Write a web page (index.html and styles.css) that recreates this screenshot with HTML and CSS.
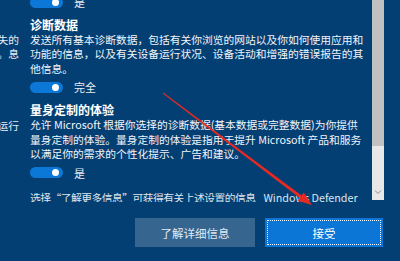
FILE: index.html
```html
<!DOCTYPE html>
<html lang="zh-CN">
<head>
    <meta charset="UTF-8">
    <meta name="viewport" content="width=device-width, initial-scale=1.0">
    <title>隐私设置</title>
    <link rel="stylesheet" href="styles.css">
</head>
<body>
    <div class="page">
        <div class="scroll-area">
            <div class="side">
                <div class="side-line side-first">失的</div>
                <div class="side-line">息。</div>
                <div class="side-line side-third">运行</div>
            </div>

            <div class="content">
                <div class="toggle-row first-row">
                    <span class="toggle"><span class="knob"></span></span>
                    <span class="toggle-label">是</span>
                </div>

                <h2>诊断数据</h2>
                <p>发送所有基本诊断数据，包括有关你浏览的网站以及你如何使用应用和<br>功能的信息，以及有关设备运行状况、设备活动和增强的错误报告的其<br>他信息。</p>

                <div class="toggle-row">
                    <span class="toggle"><span class="knob"></span></span>
                    <span class="toggle-label">完全</span>
                </div>

                <h2>量身定制的体验</h2>
                <p>允许 Microsoft 根据你选择的诊断数据(基本数据或完整数据)为你提供<br>量身定制的体验。量身定制的体验是指用于提升 Microsoft 产品和服务<br>以满足你的需求的个性化提示、广告和建议。</p>

                <div class="toggle-row">
                    <span class="toggle"><span class="knob"></span></span>
                    <span class="toggle-label">是</span>
                </div>

                <p class="more">选择“了解更多信息”可获得有关上述设置的信息 <span class="defender">Windows Defender</span></p>
            </div>

            <div class="scrollbar">
                <div class="thumb"></div>
                <div class="track">
                    <svg class="chevron" width="8" height="6" viewBox="0 0 8 6">
                        <path d="M1 1.5 L4 4.5 L7 1.5" fill="none" stroke="#8a8a8a" stroke-width="1"/>
                    </svg>
                </div>
            </div>
        </div>

        <div class="footer">
            <button class="btn btn-secondary">了解详细信息</button>
            <button class="btn btn-primary">接受</button>
        </div>
    </div>

    <!-- red annotation arrow drawn over the screenshot -->
    <svg class="annotation" width="400" height="261" viewBox="0 0 400 261">
        <polygon points="162.7,93.4 163.3,92.6 301.9,195.8 300.1,198.2" fill="#e42a22"/>
        <polygon points="312,205 303.8,192.4 297.6,200.8" fill="#e42a22"/>
    </svg>
</body>
</html>
```

FILE: styles.css
```css
body {
    margin: 0;
    width: 400px;
    height: 261px;
    overflow: hidden;
    background-color: #043f74;
    color: #ffffff;
    font-family: "Noto Sans CJK SC", "Noto Sans", sans-serif;
    position: relative;
}

.page {
    display: flex;
    flex-direction: column;
    height: 261px;
}

.scroll-area {
    display: flex;
    height: 202px;
    overflow: hidden;
}

.side {
    width: 30px;
    flex-shrink: 0;
    font-size: 10.75px;
    line-height: 14.5px;
    color: #e8eef5;
    overflow: hidden;
}

.side-line {
    width: 19px;
    white-space: nowrap;
    direction: rtl;
    overflow: hidden;
}

.side-first {
    margin-top: 32.75px;
}

.side-third {
    margin-top: 57px;
}

.content {
    width: 342px;
    flex-shrink: 0;
}

.toggle-row {
    display: flex;
    align-items: center;
    height: 11px;
    margin-top: 5.5px;
}

.first-row {
    margin-top: -3.5px;
}

.toggle {
    width: 33px;
    height: 11px;
    border-radius: 6px;
    background-color: #0b78d8;
    display: flex;
    align-items: center;
    justify-content: flex-end;
    padding-right: 4px;
    box-sizing: border-box;
}

.knob {
    width: 7px;
    height: 7px;
    border-radius: 50%;
    background-color: #ffffff;
}

.toggle-label {
    margin-left: 11px;
    font-size: 11px;
    color: #e8eef5;
}

h2 {
    margin: 10.5px 0 0 0;
    font-size: 12px;
    line-height: 14px;
    font-weight: bold;
}

p {
    margin: 0.75px 0 0 0;
    font-size: 10.75px;
    line-height: 14.5px;
    white-space: nowrap;
    color: #f2f5f9;
}

.more {
    margin-top: 13px;
    color: #dde5ee;
    letter-spacing: -0.5px;
}

.defender {
    margin-left: 6px;
    letter-spacing: 0;
}

.scrollbar {
    width: 12px;
    height: 200px;
    display: flex;
    flex-direction: column;
}

.thumb {
    height: 146px;
    background-color: #c1c1c1;
}

.track {
    flex: 1;
    background-color: #e8e8e8;
    display: flex;
    align-items: flex-end;
    justify-content: center;
    padding-bottom: 5px;
}

.footer {
    display: flex;
    justify-content: flex-end;
    gap: 10px;
    padding: 16px 17px 0 0;
}

.btn {
    height: 29px;
    border: none;
    font-family: "Noto Sans CJK SC", "Noto Sans", sans-serif;
    font-size: 11.5px;
    color: #ffffff;
    padding: 0;
}

.btn-secondary {
    width: 120px;
    background-color: #366690;
    color: #e3e9f0;
}

.btn-primary {
    width: 118px;
    background-color: #0b76d6;
    outline: 1px dotted #ffffff;
    outline-offset: -3px;
}

.annotation {
    position: absolute;
    top: 0;
    left: 0;
    pointer-events: none;
}
```
